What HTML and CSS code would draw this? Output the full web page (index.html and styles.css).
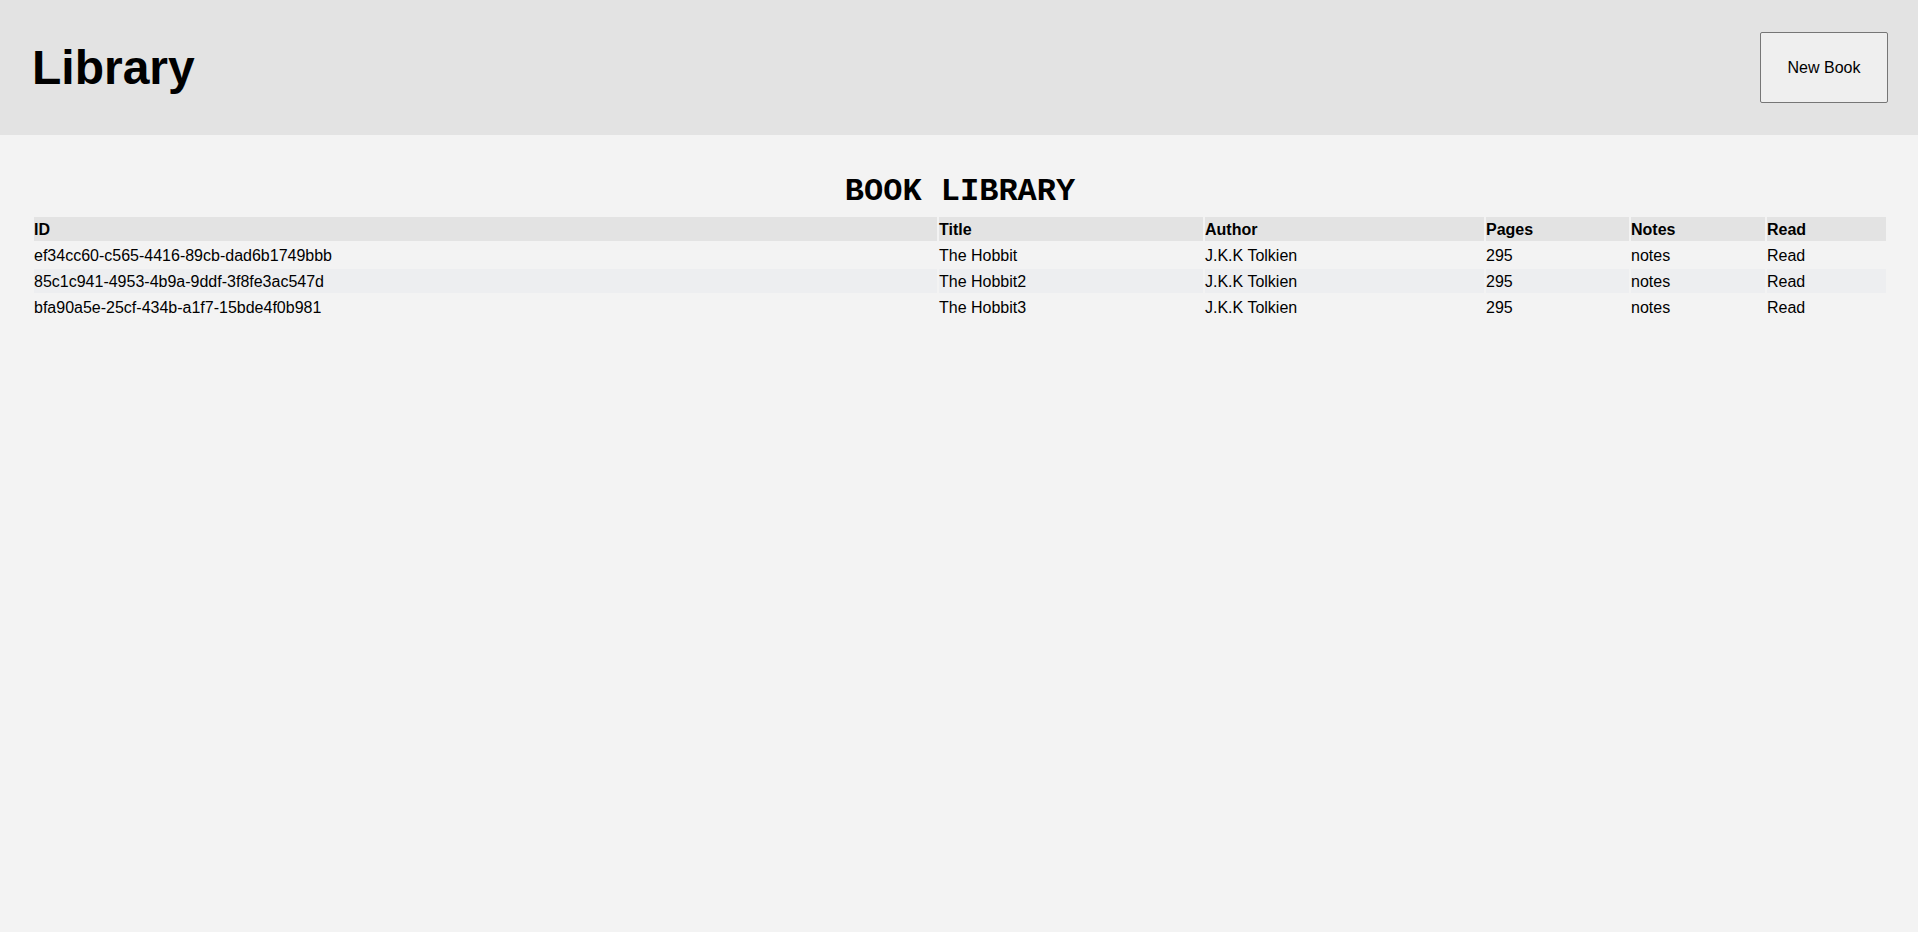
FILE: index.html
```html
<!DOCTYPE html>
<html lang="en">
<head>
<meta charset="utf-8">
<title>Library</title>
<link rel="stylesheet" href="styles.css">
</head>
<body>
<header class="topbar">
  <h1 class="brand">Library</h1>
  <button class="new-book" type="button">New Book</button>
</header>
<main class="content">
  <h2 class="section-title">BOOK LIBRARY</h2>
  <table class="books">
    <thead>
      <tr>
        <th class="col-id">ID</th>
        <th class="col-title">Title</th>
        <th class="col-author">Author</th>
        <th class="col-pages">Pages</th>
        <th class="col-notes">Notes</th>
        <th class="col-read">Read</th>
      </tr>
    </thead>
    <tbody>
      <tr>
        <td>ef34cc60-c565-4416-89cb-dad6b1749bbb</td>
        <td>The Hobbit</td>
        <td>J.K.K Tolkien</td>
        <td>295</td>
        <td>notes</td>
        <td>Read</td>
      </tr>
      <tr>
        <td>85c1c941-4953-4b9a-9ddf-3f8fe3ac547d</td>
        <td>The Hobbit2</td>
        <td>J.K.K Tolkien</td>
        <td>295</td>
        <td>notes</td>
        <td>Read</td>
      </tr>
      <tr>
        <td>bfa90a5e-25cf-434b-a1f7-15bde4f0b981</td>
        <td>The Hobbit3</td>
        <td>J.K.K Tolkien</td>
        <td>295</td>
        <td>notes</td>
        <td>Read</td>
      </tr>
    </tbody>
  </table>
</main>
</body>
</html>
```
FILE: styles.css
```css
* { box-sizing: border-box; }

html, body {
  margin: 0;
  padding: 0;
  background: #f3f3f3;
  font-family: "Liberation Sans", Arial, sans-serif;
  color: #000;
}

.topbar {
  height: 135px;
  background: #e3e3e3;
  display: flex;
  align-items: center;
  justify-content: space-between;
  padding: 0 30px 0 32px;
}

.brand {
  margin: 0;
  font-size: 48px;
  font-weight: 700;
}

.new-book {
  width: 128px;
  height: 71px;
  background: #efefef;
  border: 1px solid #767676;
  border-radius: 2px;
  font-family: "Liberation Sans", Arial, sans-serif;
  font-size: 16px;
  color: #000;
  padding: 0;
}

.content {
  padding: 39px 30px 0 32px;
}

.section-title {
  margin: 0 0 5px;
  text-align: center;
  font-family: "Liberation Mono", "Courier New", monospace;
  font-size: 32px;
  font-weight: 700;
  line-height: 36px;
}

.books {
  width: 100%;
  border-collapse: separate;
  border-spacing: 2px;
  font-size: 16px;
  table-layout: fixed;
}

.books th,
.books td {
  text-align: left;
  padding: 2px 0 0;
  line-height: 22px;
  height: 24px;
  white-space: nowrap;
}

.books th {
  background: #e3e3e3;
  font-weight: 700;
}

.books tbody tr:nth-child(even) td {
  background: #edeef0;
}

.col-id { width: 903px; }
.col-title { width: 264px; }
.col-author { width: 279px; }
.col-pages { width: 143px; }
.col-notes { width: 134px; }
.col-read { width: 119px; }
```
